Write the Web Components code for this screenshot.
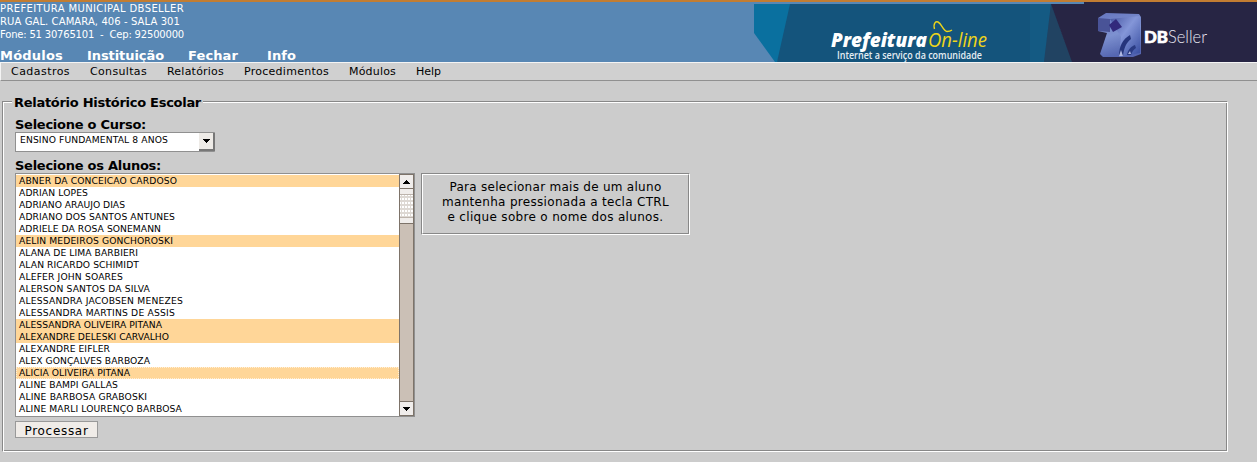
<!DOCTYPE html>
<html lang="pt-BR"><head><meta charset="utf-8"><title>DBSeller - Relatório Histórico Escolar</title>
<style>html,body{margin:0;height:100%;overflow:hidden;background:#ccc;font-family:"DejaVu Sans",sans-serif;color:#000}</style></head>
<body><school-app></school-app>
<script>
function define(name, html, ready) {
  const t = document.createElement('template');
  t.innerHTML = html;
  customElements.define(name, class extends HTMLElement {
    connectedCallback() {
      if (this.shadowRoot) return;
      this.attachShadow({mode: 'open'}).append(t.content.cloneNode(true));
      if (ready) ready.call(this, this.shadowRoot);
    }
  });
}
/* A line of text whose tracking is adjusted to a given width. */
define('fit-text', `<style>:host{display:block;white-space:pre}span{display:inline-block}</style><span><slot></slot></span>`, function (r) {
  const s = r.querySelector('span'), w = +this.getAttribute('w');
  if (w) s.style.letterSpacing = ((w - s.getBoundingClientRect().width) / this.textContent.length) + 'px';
});
define('brand-banner', `<style>:host{display:block;width:503px;height:60px;flex:none}svg{display:block}</style>
<svg width="503" height="60" viewBox="754 2 503 60">
<defs><linearGradient id="a" x1="0" y1="0" x2="1" y2="1"><stop offset="0" stop-color="#4655a0"/><stop offset=".45" stop-color="#8496d8"/><stop offset="1" stop-color="#33499d"/></linearGradient>
<linearGradient id="b" x1="0" y1="0" x2=".3" y2="1"><stop offset="0" stop-color="#6676bf"/><stop offset=".55" stop-color="#7d91d0"/><stop offset="1" stop-color="#5465b0"/></linearGradient>
<filter id="f" x="-20%" y="-20%" width="140%" height="140%"><feGaussianBlur stdDeviation=".7"/></filter></defs>
<path d="M754 4H810L777 62H775L754 33Z" fill="#0a709f"/><path d="M790 4H1060V62H777Z" fill="#14547c"/>
<path d="M1030 4H1051L1044 62H1030Z" fill="#145a83"/><path d="M1051 4L1044 62H1073Z" fill="#214362"/>
<path d="M1051 4H1084V2H1257V62H1072Z" fill="#272544"/>
<g filter="url(#f)"><path d="M1098 18L1106 13L1139 14L1141 17V54L1133 57H1103L1100 54L1107 33L1098 31Z" fill="url(#b)"/>
<path d="M1098 18L1110 19V32L1098 31Z" fill="#4a5397"/><path d="M1110 19L1140 16V53L1119 57L1121 37Z" fill="url(#a)"/>
<path d="M1109 25L1116 19L1122 27L1113 32Z" fill="#302b7c"/>
<path d="M1119 56C1119 46 1123 39 1130 35L1131 39C1126 43 1124 48 1123 56Z" fill="#25357b"/>
<path d="M1127 55C1128 50 1130 47 1135 45L1136 48C1133 50 1132 52 1131 55Z" fill="#2a3b83"/>
<path d="M1119 56L1121 50L1123 56ZM1128 54L1130 51L1131 54Z" fill="#b0b9e3"/></g>
<g font-family="Open Sans,sans-serif"><text x="831" y="47" font-size="20" font-weight="800" font-style="italic" fill="#fff" textLength="96" lengthAdjust="spacingAndGlyphs">Prefeitura</text>
<text x="928" y="47" font-size="20" font-style="italic" fill="#eed51a" textLength="59" lengthAdjust="spacingAndGlyphs">On-line</text>
<path d="M934.5 29C933 23 936 21 938 22C942 24 943 31 947 31.500Q950 31.500 952 30" fill="none" stroke="#eed51a" stroke-width="1.4"/>
<text x="837" y="58.5" font-size="10" font-weight="600" fill="#e4edf3" textLength="145" lengthAdjust="spacingAndGlyphs">Internet a serviço da comunidade</text></g>
<text x="1144" y="42.500" font-family="Lato,sans-serif" font-size="16" font-weight="900" fill="#fff" stroke="#fff" stroke-width=".6" textLength="24" lengthAdjust="spacingAndGlyphs">DB</text>
<text x="1168" y="43" font-family="Lato,sans-serif" font-size="18" font-weight="300" fill="#e8e8f2" textLength="39" lengthAdjust="spacingAndGlyphs">Seller</text></svg>`);
define('app-header', `<style>:host{display:flex;justify-content:space-between;height:60px;border-top:2px solid #c27d32;background:#5887b4;color:#fff}
.address{height:40px;font-size:10px;line-height:13px}nav{display:grid;grid-template-columns:87px 101px 79px 50px;margin-top:6px;font-size:13px;font-weight:bold;line-height:16px}</style>
<div><div class="address"><fit-text w="184">PREFEITURA MUNICIPAL DBSELLER</fit-text><fit-text w="180">RUA GAL. CAMARA, 406 - SALA 301</fit-text><fit-text w="184">Fone: 51 30765101  -  Cep: 92500000</fit-text></div>
<nav><fit-text w="63">Módulos</fit-text><fit-text w="77">Instituição</fit-text><fit-text w="50">Fechar</fit-text><fit-text w="29">Info</fit-text></nav></div><brand-banner></brand-banner>`);
define('menu-bar', `<style>:host{display:grid;box-sizing:border-box;height:19px;grid-template-columns:79px 77px 77px 105px 67px 50px;padding-left:10px;border:solid;border-width:1px 0 1px 1px;border-color:#f4f4f4 #f4f4f4 #909090;background:#d0d0d0;font-size:11px;line-height:17px}</style>
<fit-text w="59">Cadastros</fit-text><fit-text w="57">Consultas</fit-text><fit-text w="57">Relatórios</fit-text><fit-text w="85">Procedimentos</fit-text><fit-text w="47">Módulos</fit-text><fit-text w="25">Help</fit-text>`);
define('arrow-icon', `<style>:host{display:block;width:7px;height:4px}:host([up]){transform:scaleY(-1)}svg{display:block}</style><svg width="7" height="4" shape-rendering="crispEdges"><path d="M0 0H7V1H6V2H5V3H4V4H3V3H2V2H1V1H0Z"/></svg>`);
define('course-select', `<style>:host{display:flex;justify-content:space-between;box-sizing:border-box;width:200px;height:20px;border:1px solid #909090;border-right-color:#aaa;background:#fff;font-size:9.2px}fit-text{padding-left:4px;line-height:14px}.b{box-sizing:border-box;width:16px;height:18px;margin-right:-1px;display:grid;place-items:center;background:#eeebe7;border:solid;border-width:0 2px 2px 0;border-color:#777}</style>
<fit-text w="148">ENSINO FUNDAMENTAL 8 ANOS</fit-text><div class="b"><arrow-icon></arrow-icon></div>`);
define('scroll-bar', `<style>:host{display:flex;flex-direction:column;box-sizing:border-box;width:15px;border:1px solid #7d7369;background:#cbc0b6}.b{height:13px;display:grid;place-items:center;background:#f0edeb;flex:none}.up{border-bottom:1px solid #7d7369}.thumb{height:35px;box-sizing:border-box;display:flex;flex-direction:column;justify-content:center;background:#f0edeb;border-bottom:1px solid #7d7369}.grip{height:22px;border:solid #bdb4ac;border-width:1px 0;background:radial-gradient(circle at 1px 1px,#fff 1px,transparent 1.2px) 2px 3px/3px 4px,#ddd8d3}.down{margin-top:auto;border-top:1px solid #7d7369}</style>
<div class="b up"><arrow-icon up></arrow-icon></div><div class="thumb"><div class="grip"></div></div><div class="b down"><arrow-icon></arrow-icon></div>`);
define('student-option', `<style>:host{display:block;box-sizing:border-box;height:12px;padding-left:3px;line-height:12px;font-size:9.2px}:host([selected]){background:#ffd698}:host([focused]){outline:1px dotted #fff0d9;outline-offset:-1px}</style><fit-text></fit-text>`, function (r) {
  const old = r.querySelector('fit-text'), f = document.createElement('fit-text');
  f.textContent = this.textContent; f.setAttribute('w', this.getAttribute('w')); old.replaceWith(f);
});
const students = [['ABNER DA CONCEICAO CARDOSO',158,1],['ADRIAN LOPES',69],['ADRIANO ARAUJO DIAS',106],['ADRIANO DOS SANTOS ANTUNES',156],['ADRIELE DA ROSA SONEMANN',142],['AELIN MEDEIROS GONCHOROSKI',154,1],['ALANA DE LIMA BARBIERI',119],['ALAN RICARDO SCHIMIDT',120],['ALEFER JOHN SOARES',104],['ALERSON SANTOS DA SILVA',131],['ALESSANDRA JACOBSEN MENEZES',164],['ALESSANDRA MARTINS DE ASSIS',156],['ALESSANDRA OLIVEIRA PITANA',143,1],['ALEXANDRE DELESKI CARVALHO',150,1],['ALEXANDRE EIFLER',91],['ALEX GONÇALVES BARBOZA',131],['ALICIA OLIVEIRA PITANA',111,2],['ALINE BAMPI GALLAS',99],['ALINE BARBOSA GRABOSKI',128],['ALINE MARLI LOURENÇO BARBOSA',163]];
define('student-list', `<style>:host{display:flex;box-sizing:border-box;width:400px;height:244px;border:1px solid #909090;background:#fff}.rows{flex:1;padding-top:1px}</style><div class="rows"></div><scroll-bar></scroll-bar>`, function (r) {
  r.querySelector('.rows').innerHTML = students.map(([n, w, s]) => `<student-option w="${w}" ${s ? 'selected' : ''} ${s === 2 ? 'focused' : ''}>${n}</student-option>`).join('');
});
define('hint-box', `<style>:host{display:block;box-sizing:border-box;width:269px;height:62px;border:1px solid #888;border-right-color:#fff;border-bottom-color:#fff;font-size:12px;line-height:15px}.in{box-sizing:border-box;height:60px;border:1px solid #fff;border-right-color:#888;border-bottom-color:#888;padding-top:5px;display:flex;flex-direction:column;align-items:center}</style>
<div class="in"><fit-text w="212">Para selecionar mais de um aluno</fit-text><fit-text w="227">mantenha pressionada a tecla CTRL</fit-text><fit-text w="216">e clique sobre o nome dos alunos.</fit-text></div>`);
define('push-button', `<style>:host{display:flex;justify-content:center;box-sizing:border-box;width:83px;height:17px;border:1px solid #999;background:#f0ece8;font-size:12px;line-height:18px}</style><slot></slot>`);
define('report-panel', `<style>:host{display:block;padding:14px 0 0 2px}fieldset{box-sizing:border-box;width:1226px;height:357px;margin:0;padding:0 0 0 10px;border:1px solid;border-color:#888 #fff #fff #888;box-shadow:inset 1px 1px #fff,inset -1px -1px #888}
legend{margin-left:-1px;padding:0 2px;font-size:13px;font-weight:bold;line-height:15px;height:13px}.label{font-size:13px;font-weight:bold;line-height:16px;height:15px}
legend{background:#ccc}fieldset{padding-left:12px}legend{margin-left:-3px}
.row{display:flex;gap:6px}</style>
<fieldset><legend><fit-text w="187">Relatório Histórico Escolar</fit-text></legend>
<div class="label" style="margin-top:9px"><fit-text w="131">Selecione o Curso:</fit-text></div><course-select></course-select>
<div class="label" style="margin-top:6px"><fit-text w="146">Selecione os Alunos:</fit-text></div>
<div class="row"><student-list></student-list><hint-box></hint-box></div>
<push-button style="margin-top:4px"><fit-text w="64">Processar</fit-text></push-button></fieldset>`);
define('school-app', `<style>:host{display:block}</style><app-header></app-header><menu-bar></menu-bar><report-panel></report-panel>`);
</script></body></html>
